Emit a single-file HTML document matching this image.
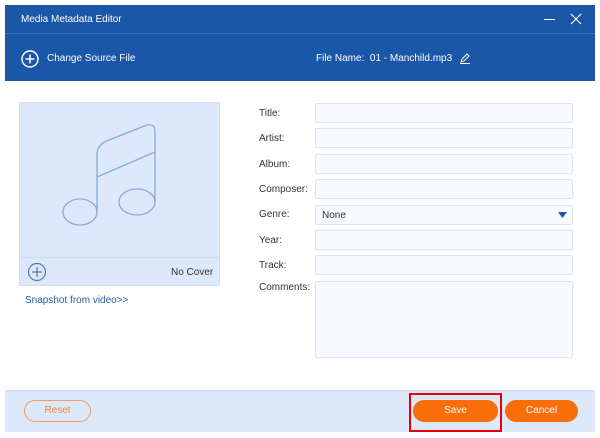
<!DOCTYPE html><html><head><style>
*{margin:0;padding:0;box-sizing:border-box}
body{width:600px;height:438px;background:#fff;font-family:"Liberation Sans",sans-serif;position:relative;overflow:hidden;font-size:10px}
.a{position:absolute}
.lbl{position:absolute;left:259px;font-size:10px;color:#333}
.f{position:absolute;left:315px;width:258px;height:20px;background:#f7faff;border:1px solid #dde5ef;border-radius:2px}
</style></head><body>
<div class="a" style="left:5px;top:5px;width:590px;height:76px;background:#1a57a8"></div>
<div class="a" style="left:5px;top:33px;width:590px;height:1px;background:#3a74c0"></div>
<div class="a" style="left:21px;top:14px;color:#fff;font-size:10px">Media Metadata Editor</div>
<div class="a" style="left:544px;top:19px;width:11px;height:1px;background:#fff"></div>
<svg class="a" style="left:570px;top:13px" width="12" height="12"><path d="M1 1L11 11M11 1L1 11" stroke="#fff" stroke-width="1.2"/></svg>
<svg class="a" style="left:21px;top:50px" width="18" height="18"><circle cx="9" cy="9" r="8" fill="none" stroke="#fff" stroke-width="1.5"/><path d="M9 4.5v9M4.5 9h9" stroke="#fff" stroke-width="1.5"/></svg>
<div class="a" style="left:47px;top:53px;color:#fff;font-size:10px">Change Source File</div>
<div class="a" style="left:316px;top:53px;color:#fff;font-size:10px">File Name:&nbsp; 01 - Manchild.mp3</div>
<svg class="a" style="left:459px;top:52px" width="12" height="12"><path d="M2 10L3 7L8 2L10 4L5 9ZM1 11.5H11" stroke="#fff" fill="none" stroke-width="1"/></svg>
<div class="a" style="left:19px;top:102px;width:201px;height:184px;background:#dde9fa;border:1px solid #d0ddee"></div>
<div class="a" style="left:19px;top:257px;width:201px;height:1px;background:#cddcf0"></div>
<svg class="a" style="left:19px;top:102px" width="201" height="155"><g fill="none" stroke="#8aaad6" stroke-width="1.3"><ellipse cx="61" cy="110" rx="17" ry="13"/><ellipse cx="118" cy="100" rx="18" ry="13"/><path d="M78 110V53Q78 42 90 38L128 23Q136 21 136 30V100M78 75L136 50"/></g></svg>
<svg class="a" style="left:27px;top:262px" width="20" height="20"><circle cx="10" cy="10" r="8.5" fill="none" stroke="#5577aa" stroke-width="1.2"/><path d="M10 5v10M5 10h10" stroke="#5577aa" stroke-width="1.2"/></svg>
<div class="a" style="left:171px;top:267px;font-size:10px;color:#333">No Cover</div>
<div class="a" style="left:25px;top:295px;font-size:10px;color:#2a5ca8">Snapshot from video&gt;&gt;</div>
<div class="lbl" style="top:108px">Title:</div><div class="f" style="top:103px"></div>
<div class="lbl" style="top:133px">Artist:</div><div class="f" style="top:128px"></div>
<div class="lbl" style="top:159px">Album:</div><div class="f" style="top:154px"></div>
<div class="lbl" style="top:184px">Composer:</div><div class="f" style="top:179px"></div>
<div class="lbl" style="top:209px">Genre:</div><div class="f" style="top:205px"><span style="position:absolute;left:6px;top:4px;font-size:10px;color:#333">None</span><svg style="position:absolute;right:5px;top:6px" width="9" height="6"><path d="M0 0H9L4.5 6Z" fill="#1a57a8"/></svg></div>
<div class="lbl" style="top:235px">Year:</div><div class="f" style="top:230px"></div>
<div class="lbl" style="top:260px">Track:</div><div class="f" style="top:255px"></div>
<div class="lbl" style="top:282px">Comments:</div><div class="f" style="top:281px;height:77px"></div>
<div class="a" style="left:5px;top:390px;width:590px;height:42px;background:#dde9fa;border-top:1px solid #cddcf0"></div>
<div class="a" style="left:24px;top:400px;width:67px;height:22px;border:1px solid #f0a060;border-radius:11px;color:#e88a3a;font-size:10px;text-align:center;line-height:20px">Reset</div>
<div class="a" style="left:409px;top:393px;width:93px;height:39px;border:2px solid #e60000"></div>
<div class="a" style="left:413px;top:400px;width:85px;height:22px;background:#f86e0a;border-radius:11px;color:#fff;font-size:10px;text-align:center;line-height:22px">Save</div>
<div class="a" style="left:505px;top:400px;width:73px;height:22px;background:#f86e0a;border-radius:11px;color:#fff;font-size:10px;text-align:center;line-height:22px">Cancel</div>
</body></html>
